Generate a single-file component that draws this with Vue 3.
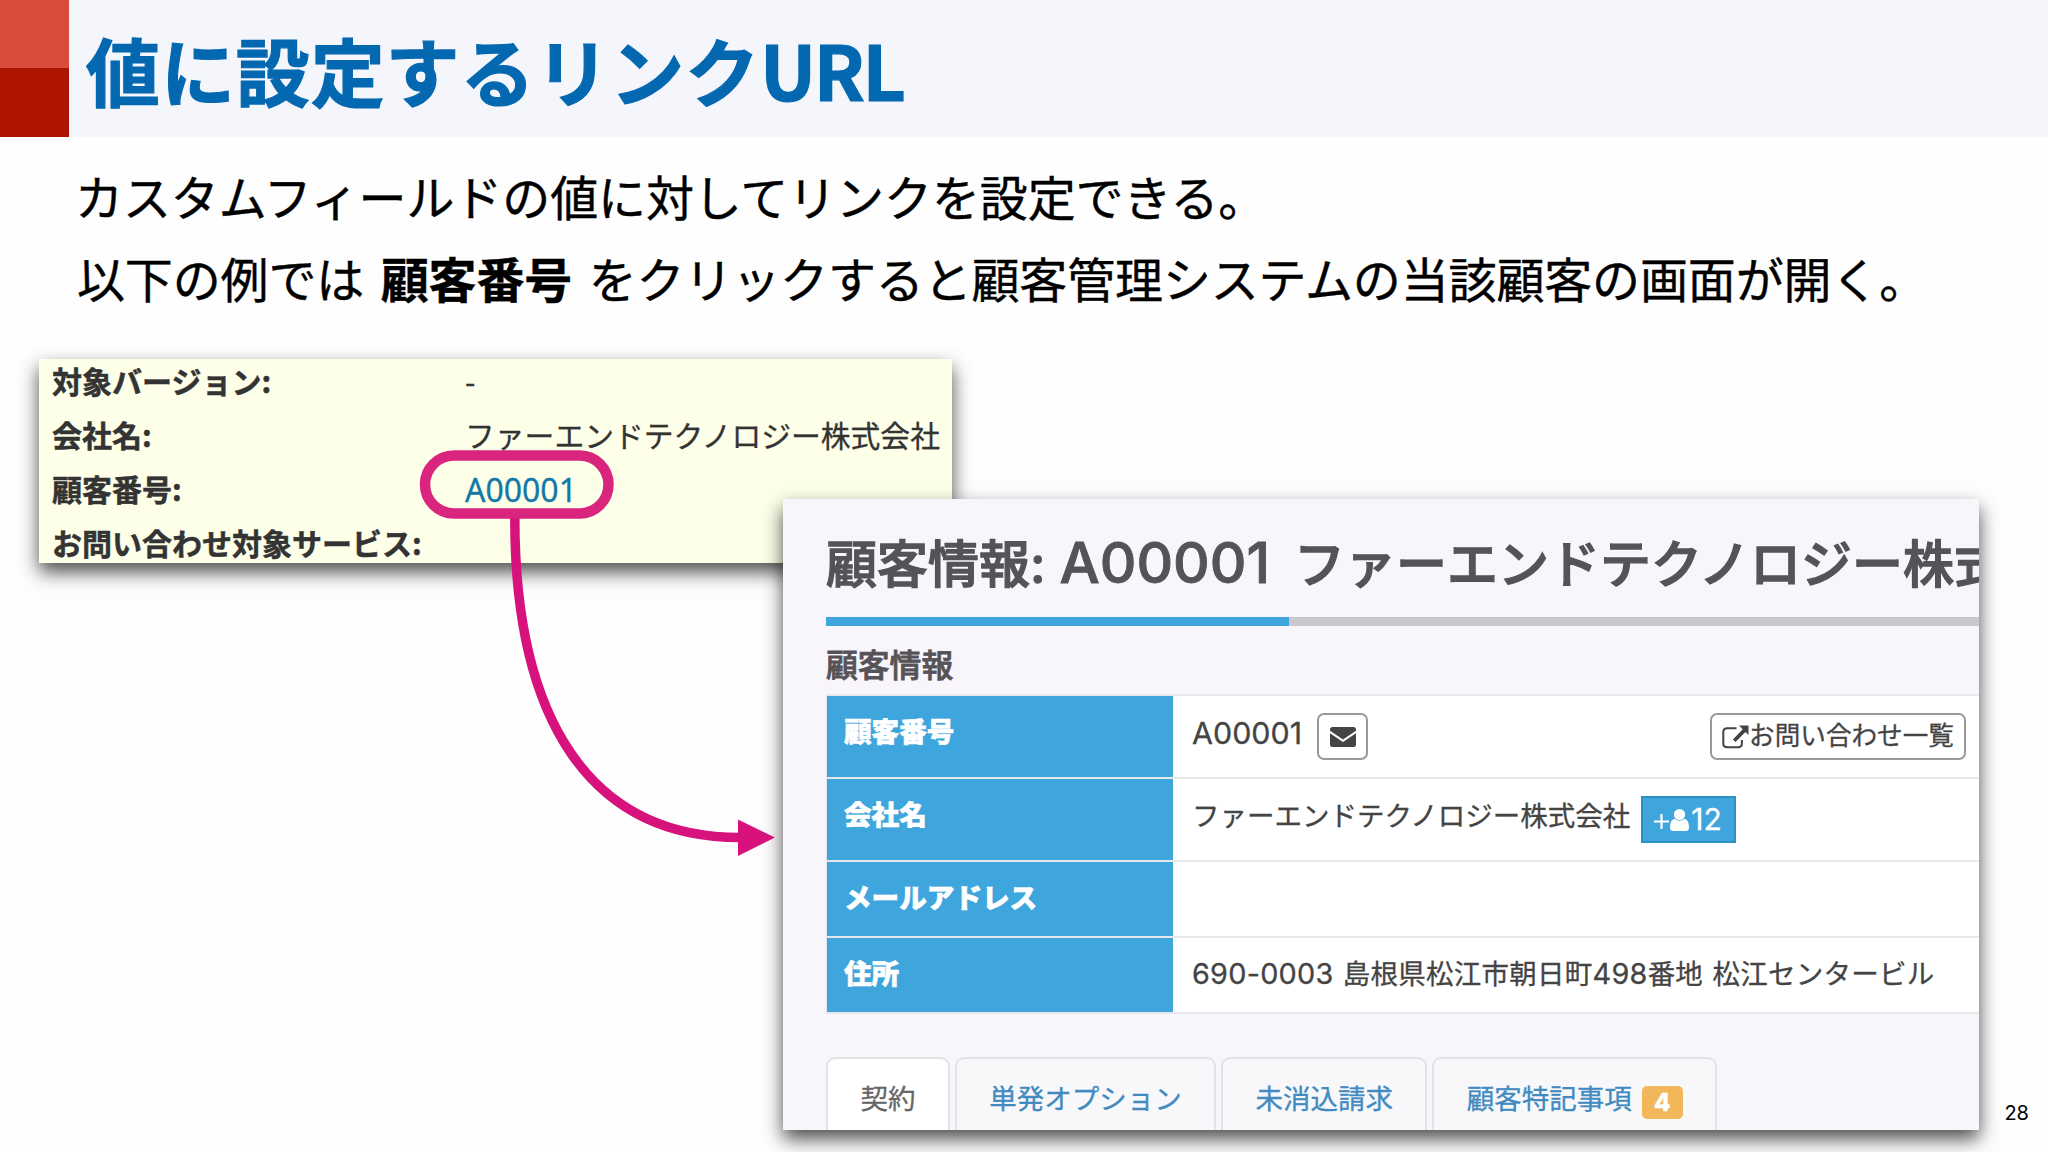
<script setup>
const issueFields = [
  { label: '対象バージョン:', value: '-' },
  { label: '会社名:', value: 'ファーエンドテクノロジー株式会社' },
  { label: '顧客番号:', value: 'A00001', link: true },
  { label: 'お問い合わせ対象サービス:', value: '' }
]

const tabs = [
  { label: '契約', active: true },
  { label: '単発オプション' },
  { label: '未消込請求' },
  { label: '顧客特記事項', count: 4 }
]
</script>

<template>
  <div class="slide">
    <header class="slide-header">
      <div class="mark"></div>
      <h1 class="title">値に設定するリンク<span class="title-latin">URL</span></h1>
    </header>

    <div class="lead">
      <p class="lead-first">カスタムフィールドの値に対してリンクを設定できる。</p>
      <p>以下の例では <b>顧客番号</b> をクリックすると顧客管理システムの当該顧客の画面が開く。</p>
    </div>

    <section class="shot issue">
      <div v-for="field in issueFields" :key="field.label" class="issue-row">
        <span class="issue-label">{{ field.label }}</span>
        <span class="issue-value" :class="{ link: field.link }">{{ field.value }}</span>
      </div>
    </section>

    <section class="shot customer">
      <h2 class="customer-title">顧客情報<span class="latin colon">:</span><span class="latin code">A00001</span>ファーエンドテクノロジー株式会社</h2>
      <div class="rule"><div class="rule-active"></div></div>
      <h3 class="customer-subtitle">顧客情報</h3>

      <div class="table">
        <div class="th">顧客番号</div>
        <div class="td">
          <span class="latin number">A00001</span>
          <button class="btn btn-mail">
            <svg width="26" height="20" viewBox="0 0 26 20">
              <path d="M2.5 0h21Q26 0 26 2.5v1.2L13 12.4 0 3.7V2.5Q0 0 2.5 0z" />
              <path d="M0 6.2 13 15l13-8.8v11.3q0 2.5-2.5 2.5h-21Q0 20 0 17.5z" />
            </svg>
          </button>
          <button class="btn btn-list">
            <svg width="27" height="24" viewBox="0 0 27 24">
              <path
                d="M14.5 3.2H5.2Q1.3 3.2 1.3 7v11.5q0 3.8 3.9 3.8H16q3.9 0 3.9-3.8V15"
                fill="none"
                stroke="currentColor"
                stroke-width="2"
              />
              <path d="M17 .5h9.5V10l-3-3L13.5 17l-2.6-2.6L20.7 4.3z" />
            </svg>
            <span>お問い合わせ一覧</span>
          </button>
        </div>

        <div class="th">会社名</div>
        <div class="td">
          <span>ファーエンドテクノロジー株式会社</span>
          <span class="members">
            <svg class="plus" width="15" height="15" viewBox="0 0 15 15">
              <path d="M7.5 0v15M0 7.5h15" fill="none" stroke="currentColor" stroke-width="2.2" />
            </svg>
            <svg width="19" height="22" viewBox="0 0 19 22">
              <ellipse cx="9.5" cy="5.5" rx="5.6" ry="5.5" />
              <path d="M4.5 9.8Q9.5 13.8 14.5 9.8 19 11 19 18.5q0 3.5-3.5 3.5h-12Q0 22 0 18.5 0 11 4.5 9.8z" />
            </svg>
            <span class="latin">12</span>
          </span>
        </div>

        <div class="th">メールアドレス</div>
        <div class="td"></div>

        <div class="th">住所</div>
        <div class="td address"><span><span class="latin">690-0003</span> 島根県松江市朝日町<span class="latin">498</span>番地 松江センタービル</span></div>
      </div>

      <nav class="tabs">
        <a v-for="tab in tabs" :key="tab.label" class="tab" :class="{ active: tab.active }">
          {{ tab.label }}
          <span v-if="tab.count" class="count">{{ tab.count }}</span>
        </a>
      </nav>
    </section>

    <!-- callout ring around the customer number and the arrow to the opened page -->
    <svg class="callout" width="2048" height="1152" viewBox="0 0 2048 1152">
      <path d="M514.8 518C514.8 720 590 837.5 740 837.5" fill="none" stroke="#d8127d" stroke-width="9.5" />
      <path d="M738 819.5 775 837.5 738 856z" fill="#d8127d" />
      <rect x="425" y="455.5" width="183.5" height="58" rx="29" fill="none" stroke="#d9257e" stroke-width="10.5" />
    </svg>

    <div class="page-number">28</div>
  </div>
</template>

<style>
body {
  background: #fefefe;
}
</style>

<style scoped>
.slide {
  position: relative;
  width: 2048px;
  height: 1152px;
  overflow: hidden;
  background: #fefefe;
  color: #000;
  font-family: 'Noto Sans CJK JP', sans-serif;
}

h1,
h2,
h3,
p {
  margin: 0;
}

.latin {
  font-family: Inter, 'Noto Sans CJK JP', sans-serif;
}

.slide-header {
  display: flex;
  height: 137px;
  background: #f5f6fb;
}

.mark {
  width: 69px;
  background: linear-gradient(#d94b3c 50%, #ae1500 50%);
}

.title {
  padding-left: 17px;
  font-size: 74px;
  font-weight: 700;
  line-height: 138px;
  letter-spacing: 0.9px;
  color: #0468b1;
  white-space: nowrap;
  -webkit-text-stroke: 1.2px #0468b1;
}

.title-latin {
  font-size: 75px;
  letter-spacing: -2.4px;
}

.lead {
  padding: 17px 0 0 77px;
  font-size: 48px;
  line-height: 82px;
  letter-spacing: -0.15px;
  word-spacing: 6px;
  white-space: nowrap;
  -webkit-text-stroke: 0.4px #000;
}

.lead-first {
  margin-left: -2px;
  letter-spacing: -0.1px;
}

.shot {
  position: absolute;
  box-sizing: border-box;
  overflow: hidden;
  box-shadow: 0 9px 18px rgba(0, 0, 0, 0.7);
}

.issue {
  left: 39px;
  top: 359px;
  width: 913px;
  height: 204px;
  padding-left: 13px;
  background: #feffe9;
  color: #333;
}

.issue-row {
  display: grid;
  grid-template-columns: 413px 1fr;
  margin-bottom: 12px;
  line-height: 42px;
  font-size: 29.8px;
  white-space: nowrap;
}

.issue-label {
  font-size: 30px;
  font-weight: 700;
  -webkit-text-stroke: 0.5px #333;
}

.issue-value {
  height: 42px;
  -webkit-text-stroke: 0.3px currentColor;
}

.link {
  font-family: 'Noto Sans', sans-serif;
  font-size: 32px;
  line-height: 46px;
  color: #1279a8;
}

.customer {
  left: 783px;
  top: 499px;
  width: 1196px;
  height: 631px;
  padding: 30px 0 0 43px;
  background: #f8f6fb;
  color: #444;
  font-size: 27.5px;
  -webkit-text-stroke: 0.3px currentColor;
}

.customer-title {
  height: 88px;
  line-height: 65px;
  font-size: 51px;
  font-weight: 500;
  color: #555357;
  white-space: nowrap;
  -webkit-text-stroke: 1.3px currentColor;
}

.colon {
  margin-right: 14px;
}

.code {
  margin-right: 24px;
  font-size: 56.8px;
  -webkit-text-stroke-width: 0.9px;
}

.rule {
  height: 9px;
  background: #c9c8cc;
}

.rule-active {
  width: 463px;
  height: 100%;
  background: #3fa6dd;
}

.customer-subtitle {
  height: 68px;
  line-height: 74px;
  font-size: 31.8px;
  font-weight: 500;
  color: #555357;
  -webkit-text-stroke: 0.8px currentColor;
}

.table {
  display: grid;
  grid-template-columns: 346px 1fr;
  grid-template-rows: 81px 81px 74px 74px;
  row-gap: 2px;
  padding: 1px 0 2px 1px;
  border-top: 1px solid #e6e8ee;
  background: #e6e7ec;
}

.th {
  padding-left: 17px;
  line-height: 69px;
  background: #3fa6dd;
  color: #fff;
  font-size: 27.6px;
  font-weight: 900;
  -webkit-text-stroke: 0.6px currentColor;
}

.td {
  display: flex;
  align-items: flex-start;
  padding-left: 19px;
  line-height: 70px;
  background: #fff;
  white-space: nowrap;
}

.number {
  font-size: 30.4px;
  line-height: 74px;
}

.address {
  letter-spacing: 0.25px;
  word-spacing: 3px;
  line-height: 69px;
}

.address .latin {
  font-size: 28.8px;
}

.btn {
  display: flex;
  align-items: center;
  justify-content: center;
  box-sizing: border-box;
  height: 47px;
  margin: 17px 0 0;
  padding: 0;
  border: 2px solid #999;
  border-radius: 7px;
  background: #fff;
  color: #444;
  font: inherit;
  font-size: 25.6px;
  line-height: 43px;
}

.btn-mail {
  width: 51px;
  margin-left: 15px;
}

.btn-list {
  width: 256px;
  margin-left: auto;
  margin-right: 13px;
}

.btn-list span {
  height: 43px;
  margin-top: -6px;
}

svg {
  flex: none;
  fill: currentColor;
}

.members {
  display: flex;
  align-items: center;
  box-sizing: border-box;
  width: 95px;
  height: 47px;
  margin: 17px 0 0 11px;
  padding-left: 11px;
  border: 2px solid #2c90c7;
  background: #3fa6dd;
  color: #fff;
  line-height: 43px;
}

.plus {
  margin: 4px 1px 0 0;
}

.members .latin {
  margin-left: 2px;
  font-size: 30px;
}

.tabs {
  display: flex;
  gap: 5px;
  margin-top: 43px;
}

.tab {
  display: flex;
  align-items: center;
  box-sizing: border-box;
  height: 78px;
  padding: 0 32.4px;
  border: 2px solid #e3e2e8;
  border-bottom: 0;
  border-radius: 9px 9px 0 0;
  background: #f8f7fa;
  color: #428bc0;
  white-space: nowrap;
}

.tab.active {
  background: #fff;
  color: #666;
}

.count {
  width: 41px;
  height: 33px;
  margin: 11px 0 0 10px;
  border-radius: 5px;
  background: #f2b75a;
  color: #fff;
  font-family: Inter, sans-serif;
  font-size: 24px;
  font-weight: 800;
  line-height: 33px;
  text-align: center;
}

.callout {
  position: absolute;
  left: 0;
  top: 0;
}

.page-number {
  position: absolute;
  right: 19px;
  bottom: 25px;
  font-family: Inter, sans-serif;
  font-size: 20px;
  line-height: 28px;
}
</style>
